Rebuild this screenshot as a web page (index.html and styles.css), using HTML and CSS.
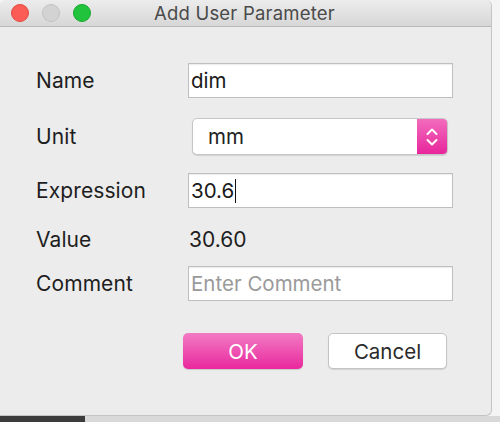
FILE: index.html
```html
<!DOCTYPE html>
<html>
<head>
<meta charset="utf-8">
<link rel="stylesheet" href="styles.css">
</head>
<body>
<div class="screen">
  <div class="top">
    <div class="window">
      <div class="titlebar">
        <div class="lights">
          <span class="light red"></span>
          <span class="light grey"></span>
          <span class="light green"></span>
        </div>
        <div class="title">Add User Parameter</div>
      </div>
      <div class="content">
        <div class="row r-name">
          <div class="label">Name</div>
          <div class="input">dim</div>
        </div>
        <div class="row r-unit">
          <div class="label">Unit</div>
          <div class="select">
            <span class="select-text">mm</span>
            <span class="select-btn">
              <svg width="14" height="22" viewBox="0 0 14 22"><path d="M2.5 8 L7 3.5 L11.5 8" fill="none" stroke="#fff" stroke-width="2" stroke-linecap="round" stroke-linejoin="round"/><path d="M2.5 14 L7 18.5 L11.5 14" fill="none" stroke="#fff" stroke-width="2" stroke-linecap="round" stroke-linejoin="round"/></svg>
            </span>
          </div>
        </div>
        <div class="row r-expr">
          <div class="label">Expression</div>
          <div class="input">30.6<span class="caret"></span></div>
        </div>
        <div class="row r-value">
          <div class="label">Value</div>
          <div class="value">30.60</div>
        </div>
        <div class="row r-comment">
          <div class="label">Comment</div>
          <div class="input placeholder">Enter Comment</div>
        </div>
        <div class="buttons">
          <div class="btn ok">OK</div>
          <div class="btn cancel">Cancel</div>
        </div>
      </div>
    </div>
    <div class="side"></div>
  </div>
  <div class="strip">
    <div class="strip-dark"></div>
    <div class="strip-light"></div>
  </div>
</div>
</body>
</html>
```

FILE: styles.css
```css
html, body {
  margin: 0;
  padding: 0;
}
body {
  width: 500px;
  height: 422px;
  overflow: hidden;
  font-family: Inter, "Liberation Sans", sans-serif;
  color: #222;
}
.screen {
  width: 500px;
  height: 422px;
  display: flex;
  flex-direction: column;
  background: #f3f3f3;
}
.top {
  display: flex;
  height: 416px;
}
.window {
  width: 491px;
  height: 415px;
  background: #ececec;
  border-right: 1px solid #c4c4c4;
  border-bottom: 1px solid #c4c4c4;
  border-radius: 6px 6px 6px 0;
  overflow: hidden;
  display: flex;
  flex-direction: column;
}
.side {
  flex: 1;
  background: #f4f4f4;
}
.titlebar {
  height: 26px;
  flex: none;
  border-bottom: 1px solid #b9b9b9;
  background: linear-gradient(#ececec, #d7d7d7);
  display: flex;
  align-items: center;
}
.lights {
  display: flex;
  gap: 13px;
  padding-left: 11px;
  width: 120px;
  box-sizing: border-box;
}
.light {
  width: 18px;
  height: 18px;
  border-radius: 50%;
  box-sizing: border-box;
}
.red { background: #fc5c56; border: 1px solid #e4473f; }
.grey { background: #d3d3d3; border: 1px solid #c2c2c2; }
.green { background: #22c33c; border: 1px solid #17a82e; }
.title {
  position: relative;
  left: 34px;
  font-size: 18.5px;
  color: #4a4a4a;
  letter-spacing: 0.2px;
}
.content {
  padding-left: 36px;
  display: flex;
  flex-direction: column;
}
.row {
  display: flex;
  align-items: center;
}
.label {
  width: 152px;
  font-size: 21px;
  letter-spacing: 0.1px;
  color: #1e1e1e;
}
.r-name { margin-top: 36px; height: 35px; }
.r-unit { margin-top: 20px; height: 37px; }
.r-expr { margin-top: 18px; height: 35px; }
.r-value { margin-top: 14px; height: 34px; }
.r-comment { margin-top: 10px; height: 35px; }
.input {
  width: 265px;
  height: 35px;
  box-sizing: border-box;
  background: #fff;
  border: 1px solid #bfbfbf;
  box-shadow: inset 0 1px 1px rgba(0,0,0,0.08);
  padding-left: 2px;
  font-size: 20.5px;
  color: #1a1a1a;
  display: flex;
  align-items: center;
}
.placeholder {
  color: #9a9a9a;
}
.caret {
  display: inline-block;
  width: 1px;
  height: 24px;
  background: #111;
  margin-left: 1px;
}
.select {
  margin-left: 4px;
  width: 256px;
  height: 37px;
  box-sizing: border-box;
  background: #fff;
  border: 1px solid #c6c6c6;
  border-radius: 5px;
  box-shadow: 0 1px 1px rgba(0,0,0,0.12);
  display: flex;
  overflow: hidden;
}
.select-text {
  flex: 1;
  padding-left: 15px;
  font-size: 20.5px;
  color: #222;
  display: flex;
  align-items: center;
}
.select-btn {
  width: 30px;
  background: linear-gradient(#f26cbd, #e8269c);
  display: flex;
  align-items: center;
  justify-content: center;
}
.value {
  font-size: 21px;
  padding-left: 1px;
  color: #1e1e1e;
}
.buttons {
  margin-top: 32px;
  padding-left: 147px;
  display: flex;
  gap: 25px;
}
.btn {
  height: 36px;
  box-sizing: border-box;
  border-radius: 5px;
  display: flex;
  align-items: center;
  justify-content: center;
  font-size: 20.5px;
}
.ok {
  width: 120px;
  color: #fff;
  background: linear-gradient(#f27bc4, #e9289d);
  box-shadow: 0 1px 1px rgba(0,0,0,0.15);
}
.cancel {
  width: 119px;
  color: #2a2a2a;
  background: #fff;
  border: 1px solid #c4c4c4;
  box-shadow: 0 1px 1px rgba(0,0,0,0.12);
}
.strip {
  flex: 1;
  display: flex;
}
.strip-dark {
  width: 85px;
  background: #3b3b3b;
}
.strip-light {
  flex: 1;
  background: #d9d9d9;
}
```
